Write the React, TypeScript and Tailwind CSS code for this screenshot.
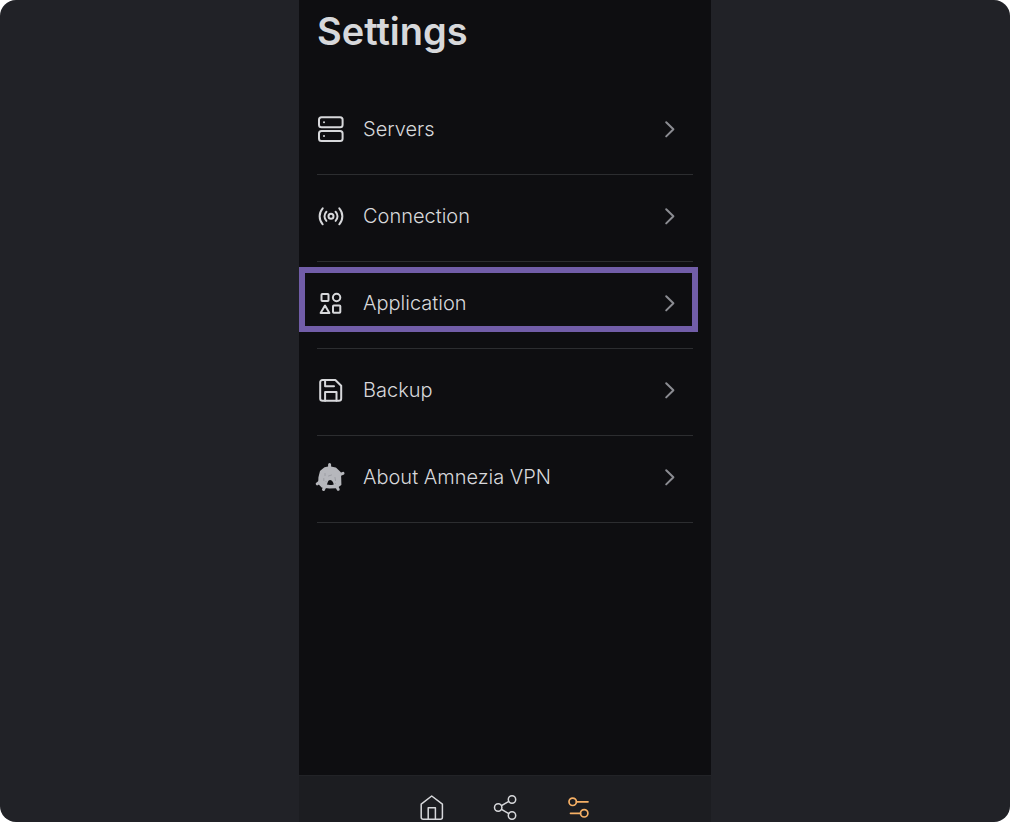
import type { ReactNode } from "react";

const stroke = {
  fill: "none",
  stroke: "currentColor",
  strokeWidth: 2,
  strokeLinecap: "round" as const,
  strokeLinejoin: "round" as const,
  "aria-hidden": true,
};

function ServersIcon() {
  return (
    <svg {...stroke} width="28" height="28" viewBox="0 0 28 28">
      <rect x="2" y="2.3" width="23.6" height="10" rx="2.5" />
      <rect x="2" y="16" width="23.6" height="10" rx="2.5" />
      <path d="M7 7.300h.01M7 21h.01" />
    </svg>
  );
}

function ConnectionIcon() {
  return (
    <svg {...stroke} width="28" height="28" viewBox="0 0 28 28">
      <circle cx="14" cy="14.300" r="2.500" />
      <path d="M18.600 9.700a6.500 6.500 0 0 1 0 9.200M9.400 18.900a6.500 6.500 0 0 1 0-9.200M22.300 6.300a12 12 0 0 1 0 16M5.700 22.300a12 12 0 0 1 0-16" />
    </svg>
  );
}

function ApplicationIcon() {
  return (
    <svg {...stroke} width="28" height="28" viewBox="0 0 28 28">
      <rect x="4.500" y="5" width="7" height="7" rx="0.800" />
      <circle cx="19.600" cy="8.500" r="3.700" />
      <path d="M8 16.500 3.600 24h8.800z" />
      <rect x="16" y="16.500" width="7.300" height="7.300" rx="0.800" />
    </svg>
  );
}

function BackupIcon() {
  return (
    <svg {...stroke} width="28" height="28" viewBox="0 0 28 28">
      <path d="M18.300 4H5.500a2.300 2.300 0 0 0-2.300 2.300v16.200a2.300 2.300 0 0 0 2.300 2.300h16.400a2.300 2.300 0 0 0 2.300-2.300V9.800z" />
      <path d="M8.100 4v6.200h8.900M8.100 24.800V16h11.400v8.800" />
    </svg>
  );
}

function AmneziaIcon() {
  return (
    <svg width="32" height="32" viewBox="0 0 32 32" aria-hidden="true">
      <g stroke="#b6b7bc" strokeLinecap="round" strokeLinejoin="round" fill="#b6b7bc">
        <path strokeWidth="3" d="M14.600 3.500v5M28 12.400l-5 2M2.200 22.800l5-4M8.500 28.500l2-4M23.200 28.300l-2-4" />
        <path strokeWidth="2" d="M14.500 6.200 20.500 7.400 24.900 11.600 25.200 17 25.400 23.500 21.600 26.200 14.500 26.600 7.400 25.800 4.200 22.500 4.400 16.500 5.900 10.600 9.800 7.300z" />
      </g>
      <path d="M11.800 23.600c1-1.300 1-4.600 3.300-4.600s3 2.300 3.700 4.400c-2 .7-4.800.8-7 .2z" fill="#0e0e11" />
      <path d="M10 12.500v2M8.800 17.500v2M13.500 15l3-1M11 20.500h.01M20 16.500l.5 3M20.500 22.500h.01" fill="none" stroke="#96979d" strokeLinecap="round" strokeWidth="0.800" />
    </svg>
  );
}

function Chevron() {
  return (
    <svg className="text-[#8b8c92]" {...stroke} width="16" height="20" viewBox="0 0 16 20">
      <path d="m4.200 3.200 7.200 7.100-7.200 7.100" />
    </svg>
  );
}

function HomeIcon() {
  return (
    <svg {...stroke} strokeWidth={1.500} width="28" height="28" viewBox="0 0 28 28">
      <path d="M3.200 11.200 13.700 3l10.700 8.200v13a2 2 0 0 1-2 2H5.200a2 2 0 0 1-2-2z" />
      <path d="M10.200 26.200V14.700h7.200v11.500" />
    </svg>
  );
}

function ShareIcon() {
  return (
    <svg {...stroke} strokeWidth={1.500} width="28" height="28" viewBox="0 0 28 28">
      <circle cx="6.200" cy="14.500" r="3.700" />
      <circle cx="20" cy="6.500" r="3.700" />
      <circle cx="20" cy="22.500" r="3.700" />
      <path d="m9.500 12.600 7.300-4.300M9.500 16.400l7.300 4.300" />
    </svg>
  );
}

function SettingsIcon() {
  return (
    <svg {...stroke} strokeWidth={1.700} width="28" height="28" viewBox="0 0 28 28">
      <circle cx="6.700" cy="8.800" r="3.700" />
      <circle cx="18.200" cy="20.300" r="3.700" />
      <path d="M10.500 8.800H22M4.500 20.300h10" />
    </svg>
  );
}

const items: { label: string; icon: ReactNode; highlighted?: boolean }[] = [
  { label: "Servers", icon: <ServersIcon /> },
  { label: "Connection", icon: <ConnectionIcon /> },
  { label: "Application", icon: <ApplicationIcon />, highlighted: true },
  { label: "Backup", icon: <BackupIcon /> },
  { label: "About Amnezia VPN", icon: <AmneziaIcon /> },
];

export default function App() {
  return (
    <div className="bg-white">
      <div className="flex min-h-screen justify-center overflow-hidden rounded-[16px] bg-[#212227] font-[Inter,'Liberation_Sans',sans-serif] text-[#d7d8db]">
        <div className="flex w-full max-w-[412px] flex-col bg-[#0e0e11]">
          <main className="grow px-[18px]">
            <h1 className="pt-1.5 pb-8 text-[38px] leading-[50px] font-semibold">Settings</h1>
            <ul>
              {items.map((item) => (
                <li key={item.label} className="relative border-b border-[#2c2d30]">
                  <button type="button" className="flex h-[86px] w-full items-center pr-[15px] pb-1 text-left">
                    <span className="flex w-7 shrink-0 justify-center [&>svg]:shrink-0">{item.icon}</span>
                    <span className="ml-[18px] grow text-[20px] leading-6 font-light">{item.label}</span>
                    <Chevron />
                  </button>
                  {item.highlighted && (
                    <span className="pointer-events-none absolute top-[5px] -right-[5px] -left-[18px] h-[65px] border-6 border-[#715da8]" />
                  )}
                </li>
              ))}
            </ul>
          </main>
          <nav aria-label="Main" className="flex h-[47px] justify-center gap-[46px] overflow-hidden border-t border-[#222327] bg-[#1c1d21] pt-[17px] pl-0.5">
            <button type="button" aria-label="Home" className="h-7">
              <HomeIcon />
            </button>
            <button type="button" aria-label="Share" className="h-7">
              <ShareIcon />
            </button>
            <button type="button" aria-label="Settings" className="h-7 text-[#f6b065]">
              <SettingsIcon />
            </button>
          </nav>
        </div>
      </div>
    </div>
  );
}
